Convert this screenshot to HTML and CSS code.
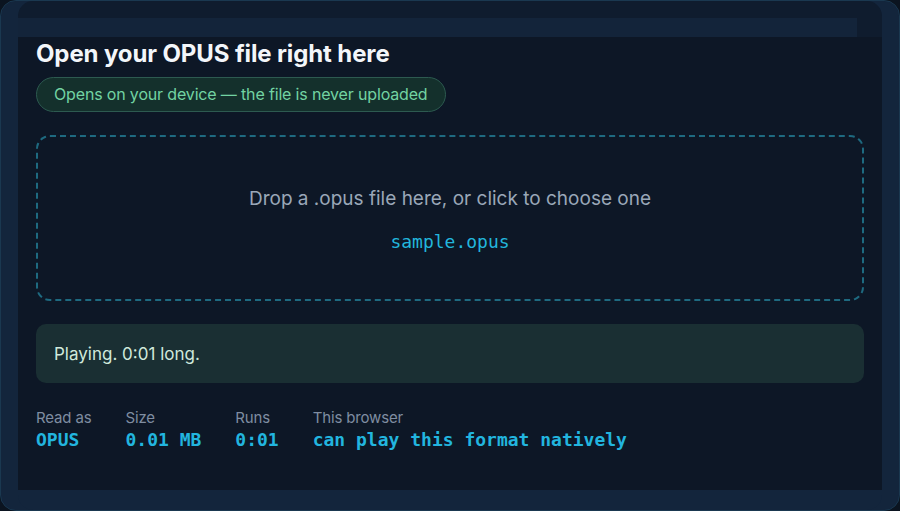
FILE: index.html
```html
<!DOCTYPE html>
<html lang="en">
<head>
<meta charset="utf-8">
<title>Open OPUS file</title>
<link rel="stylesheet" href="styles.css">
</head>
<body>
<div class="frame">
  <div class="topband"></div>
  <main class="panel">
    <h1 class="title">Open your OPUS file right here</h1>
    <div class="pill">Opens on your device — the file is never uploaded</div>
    <div class="drop">
      <div class="drop-text">Drop a .opus file here, or click to choose one</div>
      <div class="drop-file">sample.opus</div>
    </div>
    <div class="status">Playing. 0:01 long.</div>
    <div class="stats">
      <div class="stat"><div class="label">Read as</div><div class="value">OPUS</div></div>
      <div class="stat"><div class="label">Size</div><div class="value">0.01 MB</div></div>
      <div class="stat"><div class="label">Runs</div><div class="value">0:01</div></div>
      <div class="stat"><div class="label">This browser</div><div class="value">can play this format natively</div></div>
    </div>
  </main>
</div>
</body>
</html>
```

FILE: styles.css
```css
* { box-sizing: border-box; }
html, body {
  margin: 0;
  padding: 0;
  background: #0b1420;
}
.frame {
  width: 900px;
  height: 511px;
  border-radius: 16px;
  border: 1px solid #1a3850;
  background: #0f1c2e;
  box-shadow: inset 17px 0 0 #13253c, inset -17px 0 0 #13253c, inset 0 -20px 0 #13253c;
  display: flex;
  flex-direction: column;
  overflow: hidden;
  font-family: Inter, "Noto Sans", sans-serif;
}
.topband {
  height: 19px;
  margin: 17px 42px 0 17px;
  background: #13243a;
  flex: none;
}
.panel {
  flex: 1;
  margin: 0 17px 20px 17px;
  background: #0d1726;
  padding: 2px 18px 0 18px;
}
.title {
  margin: 0;
  font-size: 24px;
  line-height: 30px;
  font-weight: 700;
  color: #f3f6fa;
  letter-spacing: -0.005em;
}
.pill {
  display: inline-block;
  margin-top: 8px;
  padding: 7px 17px;
  border: 1px solid #2d5a50;
  border-radius: 999px;
  background: #14302c;
  color: #72d3a2;
  font-size: 16px;
  line-height: 19px;
  letter-spacing: -0.01em;
}
.drop {
  margin-top: 23px;
  height: 166px;
  border: 2px dashed #1e6a80;
  border-radius: 14px;
  padding-top: 50px;
  text-align: center;
}
.drop-text {
  font-size: 19px;
  line-height: 24px;
  color: #9aa7b8;
}
.drop-file {
  margin-top: 20px;
  font-family: "DejaVu Sans Mono", "Liberation Mono", monospace;
  font-size: 18px;
  line-height: 22px;
  color: #22b6dc;
}
.status {
  margin-top: 23px;
  height: 59px;
  border-radius: 10px;
  background: #1a2f33;
  padding: 19px 18px 0 18px;
  font-size: 17px;
  line-height: 22px;
  color: #d0e9dc;
}
.stats {
  margin-top: 25px;
  display: flex;
  gap: 34px;
}
.label {
  font-size: 15px;
  line-height: 20px;
  color: #7f8da1;
  letter-spacing: -0.01em;
}
.value {
  margin-top: 1px;
  font-family: "DejaVu Sans Mono", "Liberation Mono", monospace;
  font-weight: 700;
  font-size: 18px;
  line-height: 22px;
  color: #22b5df;
}
```
